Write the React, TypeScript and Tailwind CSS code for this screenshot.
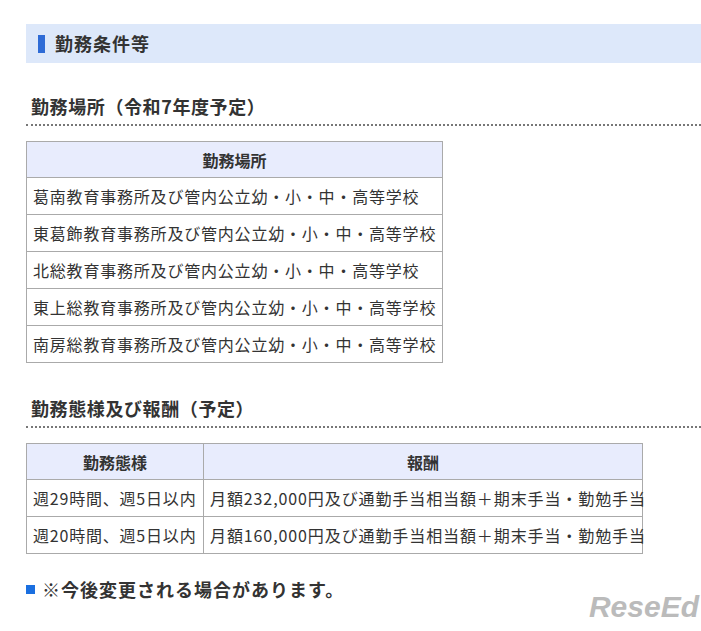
export default function App() {
  const f = { fontFamily: '"Noto Sans CJK JP", "Noto Sans", sans-serif' };
  const places = [
    "葛南教育事務所及び管内公立幼・小・中・高等学校",
    "東葛飾教育事務所及び管内公立幼・小・中・高等学校",
    "北総教育事務所及び管内公立幼・小・中・高等学校",
    "東上総教育事務所及び管内公立幼・小・中・高等学校",
    "南房総教育事務所及び管内公立幼・小・中・高等学校",
  ];
  const cell = "border border-[#aaaaaa] h-[37px] px-[6px] text-[16px] text-[#333] tracking-[0.8px] whitespace-nowrap";
  const head = "border border-[#aaaaaa] h-[36px] bg-[#e8ecfd] text-[16px] font-bold text-[#333] text-center";
  return (
    <div className="relative w-[701px] h-[631px] bg-white overflow-hidden pt-[24px] pl-[26px]" style={f}>
      <div className="h-[39px] bg-[#dde8fa] flex items-center pl-[12px]">
        <div className="w-[7px] h-[18px] bg-[#2e6bd6]" />
        <span className="ml-[10px] text-[18px] font-bold text-[#333] tracking-[1px]">勤務条件等</span>
      </div>
      <div className="mt-[28px] pl-[5px] text-[18px] font-bold text-[#333] leading-[30px] tracking-[0.6px]">勤務場所（令和7年度予定）</div>
      <div className="mt-[3px] border-b-2 border-dotted border-[#777]" />
      <table className="mt-[15px] w-[404px] border-collapse">
        <thead><tr><th className={head}>勤務場所</th></tr></thead>
        <tbody>
          {places.map((p) => (<tr key={p}><td className={cell}>{p}</td></tr>))}
        </tbody>
      </table>
      <div className="mt-[30px] pl-[5px] text-[18px] font-bold text-[#333] leading-[30px] tracking-[0.6px]">勤務態様及び報酬（予定）</div>
      <div className="mt-[3px] border-b-2 border-dotted border-[#777]" />
      <table className="mt-[15px] w-[617px] border-collapse table-fixed">
        <thead><tr><th className={head + " w-[177px]"}>勤務態様</th><th className={head}>報酬</th></tr></thead>
        <tbody>
          <tr><td className={cell + " tracking-[0.2px]"}>週29時間、週5日以内</td><td className={cell + " tracking-[0.9px]"}>月額232,000円及び通勤手当相当額＋期末手当・勤勉手当</td></tr>
          <tr><td className={cell + " tracking-[0.2px]"}>週20時間、週5日以内</td><td className={cell + " tracking-[0.9px]"}>月額160,000円及び通勤手当相当額＋期末手当・勤勉手当</td></tr>
        </tbody>
      </table>
      <div className="mt-[22px] flex items-center">
        <div className="w-[9px] h-[9px] bg-[#1a6fe0]" />
        <span className="ml-[7px] text-[18px] font-bold text-[#333] tracking-[1px]">※今後変更される場合があります。</span>
      </div>
      <div className="absolute right-[2px] bottom-[2px] text-[30px] font-bold text-[#bbbbbb] italic" style={{ fontFamily: '"Liberation Sans", sans-serif' }}>ReseEd</div>
    </div>
  );
}
